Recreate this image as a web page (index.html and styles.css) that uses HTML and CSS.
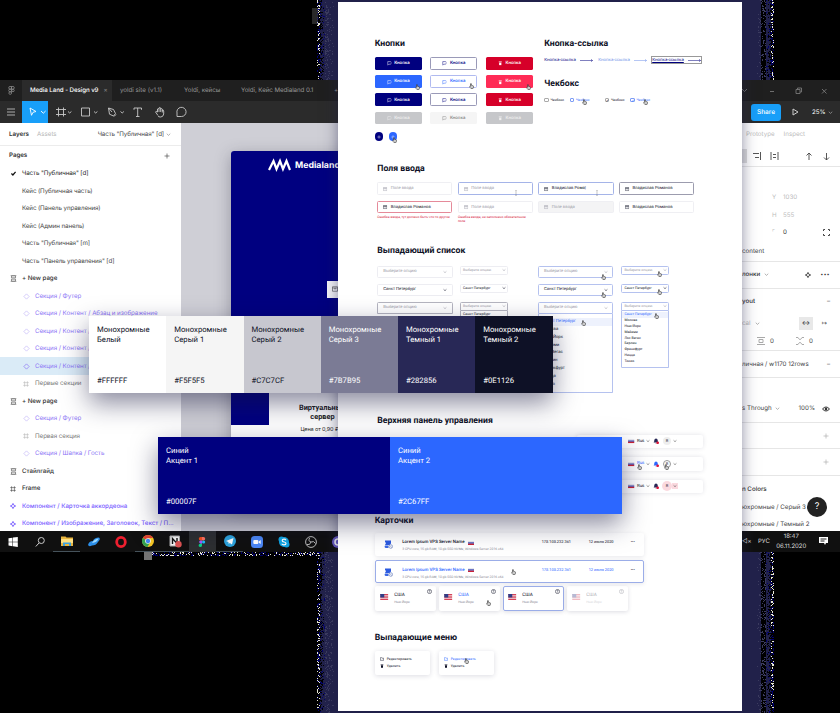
FILE: index.html
```html
<!DOCTYPE html>
<html lang="ru">
<head>
<meta charset="utf-8">
<title>Media Land - Design</title>
<link rel="stylesheet" href="styles.css">
</head>
<body>
<svg class="defs" width="0" height="0">
  <symbol id="hand" viewBox="0 0 12 14"><path d="M3.6 8V2.2a1.1 1.1 0 0 1 2.2 0V5.6l4 .8q1.4.4 1.2 2l-.7 3.1-1 1.8H4.8L1.2 8.7Q1.6 6.8 3.6 8Z" fill="#fff" stroke="#111" stroke-width="1.3"/><path d="M6 8v3M8.2 8v3" stroke="#111" stroke-width=".8"/></symbol>
  <symbol id="chev" viewBox="0 0 8 8"><path d="M1.2 2.7 4 5.4l2.8-2.7" fill="none" stroke="currentColor" stroke-width="1.1"/></symbol>
  <symbol id="chat" viewBox="0 0 12 12"><path d="M2 11.500V1.500h6.500a3.200 3.200 0 0 1 0 7H5Z" fill="none" stroke="currentColor" stroke-width="1.3"/></symbol>
  <symbol id="trash" viewBox="0 0 12 12"><path d="M2 1.500h8v2H2zM3 4.500h6V11H3z" fill="currentColor"/></symbol>
  <symbol id="mail" viewBox="0 0 12 12"><path d="M1 1.500h10v9H1zM1 4h10M4 5.500h4" fill="none" stroke="currentColor" stroke-width="1.3"/></symbol>
  <symbol id="arrow" viewBox="0 0 26 6"><path d="M0 3h25M22 .6 25 3l-3 2.400" fill="none" stroke="currentColor"/></symbol>
  <symbol id="ru" viewBox="0 0 9 6"><path fill="#e8e8ef" d="M0 0h9v2H0z"/><path fill="#2937a8" d="M0 2h9v2H0z"/><path fill="#c92236" d="M0 4h9v2H0z"/></symbol>
  <symbol id="us" viewBox="0 0 16 12"><path fill="#f5e9ee" d="M0 0h16v12H0z"/><path d="M0 1h16M0 4.300h16M0 7.600h16M0 11h16" stroke="#d22f45" stroke-width="1.8"/><path fill="#303d86" d="M0 0h8v6.800H0z"/></symbol>
  <symbol id="diamond" viewBox="0 0 12 12"><path d="m6 1.500 4.500 4.500L6 10.500 1.500 6Z" fill="none" stroke="currentColor" stroke-width="1.2"/></symbol>
  <symbol id="comp" viewBox="0 0 12 12"><path d="m6 0 2.400 2.400L6 4.800 3.600 2.400ZM6 7.200l2.400 2.400L6 12 3.600 9.600ZM2.400 3.600 4.800 6 2.400 8.400 0 6ZM9.600 3.600 12 6 9.600 8.400 7.200 6Z" fill="currentColor"/></symbol>
  <symbol id="frame" viewBox="0 0 12 12"><path d="M3.200.5v11M8.800.5v11M.5 3.200h11M.5 8.800h11" fill="none" stroke="currentColor" stroke-width="1.2"/></symbol>
  <symbol id="stack" viewBox="0 0 12 12"><path d="M2.500 1.500h7v3.400h-7zM2.500 7.100h7v3.400h-7zM1 .2h10M1 11.800h10" fill="none" stroke="currentColor"/></symbol>
  <symbol id="bell" viewBox="0 0 12 12"><path d="M1.500 9V7.800l1-1V4.500Q3 1.500 6 1q3 .5 3.500 3.500v2.300l1 1V9ZM4.600 9.800h2.800L6 11Z" fill="currentColor"/><circle cx="9.300" cy="9.500" r="2.700" fill="#df1539"/></symbol>
  <symbol id="server" viewBox="0 0 18 18"><path d="M2 1h12v6l-3 3H2l2-4-2-2Z" fill="#2c5be0"/><path d="M2 11h7v5H3l-2-2Z" fill="#3b68e4"/><circle cx="13.500" cy="13" r="3.600" fill="#fff" stroke="#6b81bd" stroke-width="1.4"/><path d="m11 11 5 4" stroke="#6b81bd"/></symbol>
  <symbol id="ask" viewBox="0 0 12 12"><circle cx="6" cy="6" r="5" fill="none" stroke="currentColor" stroke-width="1.2"/><path d="M4.500 5q0-1.700 1.600-1.700T7.600 5Q7.500 5.700 6 6.500v.7M6 8v1.200" fill="none" stroke="currentColor" stroke-width="1"/></symbol>
  <symbol id="plus" viewBox="0 0 12 12"><path d="M6 1v10M1 6h10" stroke="currentColor" stroke-width="1.3"/></symbol>
  <symbol id="folder" viewBox="0 0 12 12"><path d="M1 2h4l1 1.500h5V10H1z" fill="none" stroke="currentColor" stroke-width="1.4"/></symbol>
  <symbol id="caret" viewBox="0 0 6 20"><path d="M1 1q2 0 2 2v14q0 2-2 2M5 1Q3 1 3 3M5 19q-2 0-2-2" fill="none" stroke="#555" stroke-width="1.1"/></symbol>
</svg>

<svg class="halo" width="840" height="713" shape-rendering="crispEdges">
  <rect x="325" y="0" width="436" height="713" fill="#22224b"/>
</svg>

<main class="window">
  <header class="tabs">
    <div class="tab logo"><svg width="7" height="9" viewBox="0 0 7 9" fill="none" stroke="#888" stroke-width=".8"><path d="M3.500.5H2a1.300 1.300 0 0 0 0 2.600h1.500zM3.500.5H5a1.300 1.300 0 0 1 0 2.600H3.500zM3.500 3.200H2a1.300 1.300 0 0 0 0 2.600h1.500zM3.500 5.800H2A1.300 1.300 0 1 0 3.500 7z"/><circle cx="5" cy="4.500" r="1.200"/></svg></div>
    <div class="tab active">Media Land - Design v9<span class="x">×</span></div>
    <div class="tab t2">yoldi site (v1.1)</div>
    <div class="tab t3">Yoldi, кейсы</div>
    <div class="tab t4">Yoldi, Кейс Medialand 0.1</div>
    <div class="tab t5">+</div>
    <div class="winctl"><svg width="100" height="21" fill="none" stroke="#777" stroke-width=".9"><path d="m2 9 2.500 2.500L7 9M30 11.500h4M56 9.500h4v4h-4zM57.500 9.500V8h4v4H60M82 9l4.500 4.500M86.500 9 82 13.500"/></svg></div>
  </header>
  <div class="toolbar">
    <div class="tool burger"><svg width="22" height="22" stroke="#bbb" stroke-width=".9"><path d="M7 8h8M7 11h8M7 14h8"/></svg></div>
    <div class="tool picked"><svg width="26" height="22" fill="none" stroke="#fff" stroke-width=".9"><path d="m8 7 6 3.500-3 .8-1.500 3zM19 10l2.300 2.200L23.600 10"/></svg></div>
    <svg width="155" height="22" fill="none" stroke="#c9c9c9" stroke-width=".9"><path d="M10.500 6.500v9M15.500 6.500v9M8 8.500h10M8 13.500h10M20 10.500l1.700 1.500 1.700-1.500M33.500 7h8v8h-8zM46 10.500l1.700 1.500 1.700-1.500M60.500 7l5 1.500 2 4-2 2.500-4-1.800zM60.500 7l3.500 4M66 15.500l2-2M72.500 10.500l1.700 1.500 1.700-1.500M86 8.800V7h7.500v1.800M89.700 7v8.500M88 15.500h3.500"/><path d="M110 14.500l-2.500-3.500q.5-1.500 2 0V8q1-1.200 1.500 0V7q1-1.200 1.700 0v1q1-1 1.600 0v1.500q1.200-1 1.400.500v3q-.5 3-3 3t-2.700-1M111 8v3M112.700 8v3M114.300 9v2.500M129 15.500v-3.500a4.600 4.600 0 1 1 4.500 3.500z"/></svg>
    <span class="grow"></span>
    <b class="share">Share</b>
    <svg class="play" width="8" height="8" viewBox="0 0 8 8"><path d="M2 1v6l5-3z" fill="none" stroke="#ccc"/></svg>
    <span class="pct">25% <svg class="c5"><use href="#chev"/></svg></span>
  </div>

  <div class="work">
    <aside class="left">
      <div class="lhead"><b>Layers</b><span class="dim">Assets</span><span class="pg">Часть "Публичная" [d] <svg class="c5"><use href="#chev"/></svg></span></div>
      <div class="row pages"><b>Pages</b><svg class="i6"><use href="#plus"/></svg></div>
      <div class="row page cur"><svg width="5" height="5" viewBox="0 0 6 6"><path d="M.5 3 2.300 4.800 5.500 1" stroke="#111" stroke-width="1.500" fill="none"/></svg><span>Часть "Публичная" [d]</span></div>
      <div class="row page"><span>Кейс (Публичная часть)</span></div>
      <div class="row page"><span>Кейс (Панель управления)</span></div>
      <div class="row page"><span>Кейс (Админ панель)</span></div>
      <div class="row page"><span>Часть "Публичная" [m]</span></div>
      <div class="row page"><span>Часть "Панель управления" [d]</span></div>
      <div class="row top"><svg class="i7"><use href="#stack"/></svg><b>+ New page</b></div>
      <div class="row sub v"><svg class="i7"><use href="#diamond"/></svg>Секция / Футер</div>
      <div class="row sub v"><svg class="i7"><use href="#diamond"/></svg>Секция / Контент / Абзац и изображение</div>
      <div class="row sub v"><svg class="i7"><use href="#diamond"/></svg>Секция / Контент /</div>
      <div class="row sub v"><svg class="i7"><use href="#diamond"/></svg>Секция / Контент /</div>
      <div class="row sub v sel"><svg class="i7"><use href="#diamond"/></svg>Секция / Контент /</div>
      <div class="row sub"><svg class="i6"><use href="#frame"/></svg><span>Первые секции</span></div>
      <div class="row top"><svg class="i7"><use href="#stack"/></svg><b>+ New page</b></div>
      <div class="row sub v"><svg class="i7"><use href="#diamond"/></svg>Секция / Футер</div>
      <div class="row sub"><svg class="i6"><use href="#frame"/></svg><span>Первая секция</span></div>
      <div class="row sub v"><svg class="i7"><use href="#diamond"/></svg>Секция / Шапка / Гость</div>
      <div class="row top"><svg class="i7"><use href="#stack"/></svg><b>Стайлгайд</b></div>
      <div class="row top"><svg class="i6"><use href="#frame"/></svg><b>Frame</b></div>
      <div class="row top cm"><svg class="i6"><use href="#comp"/></svg><b>Компонент / Карточка аккордеона</b></div>
      <div class="row top cm"><svg class="i6"><use href="#comp"/></svg><b>Компонент / Изображение, Заголовок, Текст / П...</b></div>
    </aside>
    <section class="canvas">
      <div class="site">
        <div class="hero">
          <div class="brand"><svg width="23" height="12" viewBox="0 0 23 12"><path d="M1 11 5.500 2l3 8L12 2l3 8 3.500-8L22 11" fill="none" stroke="#fff" stroke-width="2.200"/></svg>Medialand</div>
          <div class="field"><svg class="i6"><use href="#mail"/></svg></div>
        </div>
        <div class="offer"><b>Виртуальный<br>сервер</b><span>Цена от 0,90 ₽ / час</span></div>
      </div>
    </section>
    <aside class="right">
      <div class="r h23 tabsr"><span>Prototype</span><span>Inspect</span></div>
      <div class="r h21 line"><svg width="98" height="14" fill="none" stroke="#444" stroke-width=".9"><path fill="#ddd" stroke="none" d="M0 0h5v14H0z"/><path d="M11 4.500h6M13 8.500h4M18.500 3v8M29 3v8M36 3v8M31 5.500h3M31 8.500h3M67 11V4M64.500 6.500 67 4l2.500 2.500M84.500 4v7M82 8.500l2.500 2.500L87 8.500"/></svg></div>
      <div class="r h22"></div>
      <div class="r h17 yh"><i>Y</i><span>1030</span></div>
      <div class="r h18 yh"><i>H</i><span>555</span></div>
      <div class="r h18 yh dark"><i>⌜</i><span>0</span><svg width="7" height="7" viewBox="0 0 7 7" fill="none" stroke="#444"><path d="M.5 2V.5H2M5 .5h1.500V2M6.500 5v1.500H5M2 6.500H.5V5"/></svg></div>
      <div class="r h20 line">content</div>
      <div class="r h27 line two"><b>лонки</b><svg class="c5"><use href="#chev"/></svg><svg class="i6 push"><use href="#comp"/></svg><b class="dots">•••</b></div>
      <div class="r h23b"><b>yout</b><em>–</em></div>
      <div class="r h17 two"><span class="dim">cal</span><svg class="c5"><use href="#chev"/></svg><span class="key push">↔</span><span class="key2">↦</span></div>
      <div class="r h22b line gaps"><svg width="8" height="8" fill="none" stroke="#aaa"><path d="M0 .5h8M0 7.500h8M2 2.500h4v3H2z"/></svg><span>0</span><svg width="8" height="8" fill="none" stroke="#aaa"><path d="M0 .5h2l1.500 2h1L6 .5h2M0 7.500h2l1.500-2h1L6 7.500h2"/></svg><span>0</span></div>
      <div class="r h27 line"><span>личная / w1170 12rows</span><em>–</em></div>
      <div class="r h17"></div>
      <div class="r h28 line"><span>s Through</span><svg class="c5 thr"><use href="#chev"/></svg><span class="push op">100%</span><svg width="8" height="6" viewBox="0 0 8 6"><path d="M.5 3Q4-1 7.500 3 4 7 .5 3Z" fill="none" stroke="#333"/><circle cx="4" cy="3" r="1.300" fill="#333"/></svg></div>
      <div class="r h26 line"><svg class="i6 push pl"><use href="#plus"/></svg></div>
      <div class="r h27 line"><svg class="i6 push pl"><use href="#plus"/></svg></div>
      <div class="r h17 colors"><b>n Colors</b></div>
      <div class="r h17">юхромные / Серый 3</div>
      <div class="r h17">юхромные / Темный 2</div>
      <div class="help">?</div>
    </aside>
  </div>

  <footer class="taskbar">
    <div class="ti"><svg viewBox="0 0 12 12"><path fill="#fff" d="m1.500 2.300 4-.6v4h-4zM6 1.600l4.800-.7v4.800H6zM1.500 6.200h4v4l-4-.6zM6 6.200h4.800V11L6 10.300z"/></svg></div>
    <div class="ti"><svg viewBox="0 0 12 12" fill="none" stroke="#ccc"><circle cx="7.300" cy="4.500" r="3"/><path d="M5 7 1.800 10.500"/></svg></div>
    <div class="ti run"><svg viewBox="0 0 12 12"><path fill="#e9b640" d="M0 1.500h4.500l1 1H12V11H0z"/><path fill="#ffe083" d="M0 4h12v4H0z"/><path fill="#3da1e0" d="M2 7.500h8V11H8V9H4v2H2z"/></svg></div>
    <div class="ti"><svg viewBox="0 0 12 12"><path fill="#2b8ee8" d="M0 9q1-4 5-4 1-3.500 6-3.500 2 1.500-1 4.500Q8 9.500 4 9.500 1 11 0 9Z"/><path fill="#9edbff" d="M4 7q2-4 6.500-4.500Q9 6.500 4 7Z"/></svg></div>
    <div class="ti"><svg viewBox="0 0 12 12"><ellipse cx="6" cy="6" rx="4.300" ry="4.600" fill="none" stroke="#ee1f2f" stroke-width="2.800"/></svg></div>
    <div class="ti run"><svg viewBox="0 0 12 12"><circle cx="6" cy="6" r="6" fill="#f4c525"/><path fill="#df4435" d="M6 6 .8 3A6 6 0 0 1 11.200 3H6z"/><path fill="#34a151" d="M.8 3A6 6 0 0 0 5.500 12L8 7.500z"/><circle cx="6" cy="6" r="2.800" fill="#fff"/><circle cx="6" cy="6" r="2.200" fill="#4285f4"/></svg></div>
    <div class="ti run"><svg viewBox="0 0 12 12"><path fill="#f4f4f4" stroke="#aaa" d="M1 1h9.500v10H1z"/><path d="M3.500 9V3.500L8 8.500V3" stroke="#111" stroke-width="1.400" fill="none"/><circle cx="9.500" cy="9.300" r="3.200" fill="#dd5252"/></svg></div>
    <div class="ti hot"><svg viewBox="0 0 12 12"><path fill="#f24e1e" d="M6 1H4.500a1.700 1.700 0 0 0 0 3.400H6z"/><path fill="#ff7262" d="M6 1h1.500a1.700 1.700 0 0 1 0 3.400H6z"/><path fill="#a259ff" d="M6 4.400H4.500a1.700 1.700 0 0 0 0 3.300H6z"/><circle cx="7.600" cy="6" r="1.600" fill="#1abcfe"/><path fill="#0acf83" d="M6 7.700H4.500A1.700 1.700 0 1 0 6 9.500z"/></svg></div>
    <div class="ti run"><svg viewBox="0 0 12 12"><circle cx="6" cy="6" r="6" fill="#2da3dd"/><path fill="#fff" d="m2 6 7.500-3L8 9.500 5.800 8 4.700 9 4.400 7z"/></svg></div>
    <div class="ti"><svg viewBox="0 0 12 12"><rect width="12" height="12" rx="3.500" fill="#4b86f4"/><rect x="2.300" y="4" width="5" height="4" rx="1" fill="#fff"/><path fill="#fff" d="m7.700 5.500 2-1.400v4l-2-1.400z"/></svg></div>
    <div class="ti"><svg viewBox="0 0 12 12"><circle cx="6" cy="6" r="5" fill="#0fa5e4"/><circle cx="3.500" cy="3.500" r="3" fill="#0fa5e4"/><circle cx="8.500" cy="8.500" r="3" fill="#0fa5e4"/><path d="M8 4.200Q7.500 3.200 6 3.200q-1.800 0-1.800 1.300Q4.200 5.700 6 6q2 .3 2 1.500 0 1.300-2 1.300T4 7.800" fill="none" stroke="#fff" stroke-width="1.200"/></svg></div>
    <div class="ti"><svg viewBox="0 0 12 12" fill="none" stroke="#bbb"><circle cx="6" cy="6" r="5.400"/><path d="M6 6Q3 5.500 4.500 2M6 6q3-1.500 4.500 1.500M6 6q-1 3.500-4 2.500"/></svg></div>
    <div class="ti"><svg viewBox="0 0 12 12"><circle cx="6" cy="6" r="6" fill="#6a5cc8"/><circle cx="6" cy="6" r="3" fill="none" stroke="#fff" stroke-width="1.500"/></svg></div>
    <div class="tray"><span>◁×</span><span>РУС</span><span class="clock">18:47<br>06.11.2020</span><svg width="10" height="9" viewBox="0 0 10 9"><path fill="#fff" d="M0 0h9v6H7l-1 2-1-2H0z"/><path d="M1.500 2h6M1.500 4h4" stroke="#222"/></svg></div>
  </footer>
</main>

<article class="sheet">
  <section class="s-buttons">
    <div>
      <h2>Кнопки</h2>
      <div class="btns">
        <div class="btn navy"><svg><use href="#chat"/></svg>Кнопка</div><div class="btn out"><svg><use href="#chat"/></svg>Кнопка</div><div class="btn red"><svg><use href="#trash"/></svg>Кнопка</div>
        <div class="btn blue"><svg><use href="#chat"/></svg>Кнопка<svg class="hand"><use href="#hand"/></svg></div><div class="btn out hov"><svg><use href="#chat"/></svg>Кнопка<svg class="hand"><use href="#hand"/></svg></div><div class="btn pink"><svg><use href="#trash"/></svg>Кнопка<svg class="hand"><use href="#hand"/></svg></div>
        <div class="btn navy"><svg><use href="#chat"/></svg>Кнопка</div><div class="btn out"><svg><use href="#chat"/></svg>Кнопка</div><div class="btn red"><svg><use href="#trash"/></svg>Кнопка</div>
        <div class="btn off"><svg><use href="#chat"/></svg>Кнопка</div><div class="btn off2"><svg><use href="#chat"/></svg>Кнопка</div><div class="btn off"><svg><use href="#trash"/></svg>Кнопка</div>
      </div>
      <div class="rounds"><i class="navy"><svg><use href="#plus"/></svg></i><i class="blue"><svg><use href="#plus"/></svg><svg class="hand"><use href="#hand"/></svg></i></div>
    </div>
    <div>
      <h2>Кнопка-ссылка</h2>
      <div class="links"><span>Кнопка-ссылка<svg><use href="#arrow"/></svg></span><span class="lb">Кнопка-ссылка<svg><use href="#arrow"/></svg></span><span class="lf"><u>Кнопка-ссылка</u><svg><use href="#arrow"/></svg></span></div>
      <h2 class="h-check">Чекбокс</h2>
      <div class="checks"><label><i></i>Чекбокс</label><label class="lb"><i></i>Чекбокс<svg class="hand"><use href="#hand"/></svg></label><label class="c3"><i>✓</i>Чекбокс</label><label class="lb"><i>✓</i>Чекбокс<svg class="hand"><use href="#hand"/></svg></label></div>
    </div>
  </section>

  <section class="s-inputs">
    <h2>Поля ввода</h2>
    <div class="inputs">
      <div class="inp ph"><svg><use href="#mail"/></svg>Поле ввода</div>
      <div class="inp ph foc"><svg><use href="#mail"/></svg>Поле ввода<svg class="ibeam"><use href="#caret"/></svg></div>
      <div class="inp foc"><svg><use href="#mail"/></svg>Владислав Рома|<svg class="ibeam"><use href="#caret"/></svg></div>
      <div class="inp drk"><svg><use href="#mail"/></svg>Владислав Романов</div>
      <div><div class="inp err"><svg><use href="#mail"/></svg>Владислав Романов</div><p>Ошибка ввода, тут должно быть что-то другое</p></div>
      <div><div class="inp ph"><svg><use href="#mail"/></svg>Поле ввода</div><p>Ошибка ввода, не заполнено обязательное поле</p></div>
      <div class="inp ph dis"><svg><use href="#mail"/></svg>Поле ввода</div>
      <div class="inp"><svg><use href="#mail"/></svg>Владислав Романов</div>
    </div>
  </section>

  <section class="s-drop">
    <h2>Выпадающий список</h2>
    <div class="drops">
      <div class="col big">
        <div class="dd ph">Выберите опцию<svg class="c4"><use href="#chev"/></svg></div>
        <div class="dd">Санкт Петербург<svg class="c4"><use href="#chev"/></svg></div>
        <div class="dd ph open g">Выберите опцию<svg class="c4"><use href="#chev"/></svg></div>
      </div>
      <div class="col small">
        <div class="dd ph">Выберите опцию<svg class="c4"><use href="#chev"/></svg></div>
        <div class="dd">Санкт Петербург<svg class="c4"><use href="#chev"/></svg></div>
        <div class="dd ph open g">Выберите опцию<svg class="c4"><use href="#chev"/></svg></div>
        <div class="list g"><span>Санкт Петербург</span></div>
      </div>
      <div class="col big hv">
        <div class="dd ph">Выберите опцию<svg class="c4"><use href="#chev"/></svg><svg class="hand"><use href="#hand"/></svg></div>
        <div class="dd">Санкт Петербург<svg class="c4"><use href="#chev"/></svg><svg class="hand"><use href="#hand"/></svg></div>
        <div class="dd ph open">Выберите опцию<svg class="c4"><use href="#chev"/></svg></div>
        <div class="list"><span class="on">Санкт Петербург<svg class="hand"><use href="#hand"/></svg></span><span>Москва</span><span>Нью-Йорк</span><span>Майами</span><span>Лос Вегас</span><span>Берлин</span><span>Франкфурт</span><span>Ницца</span><span>Токио</span></div>
      </div>
      <div class="col small hv">
        <div class="dd ph">Выберите опцию<svg class="c4"><use href="#chev"/></svg><svg class="hand"><use href="#hand"/></svg></div>
        <div class="dd">Санкт Петербург<svg class="c4"><use href="#chev"/></svg><svg class="hand"><use href="#hand"/></svg></div>
        <div class="dd ph open">Выберите опцию<svg class="c4"><use href="#chev"/></svg></div>
        <div class="list"><span class="on">Санкт Петербург<svg class="hand"><use href="#hand"/></svg></span><span>Москва</span><span>Нью-Йорк</span><span>Майами</span><span>Лос Вегас</span><span>Берлин</span><span>Франкфурт</span><span>Ницца</span><span>Токио</span></div>
      </div>
    </div>
  </section>

  <section class="s-top">
    <h2>Верхняя панель управления</h2>
    <div class="bars">
      <div class="bar"><svg class="fl"><use href="#ru"/></svg><span>Rus</span><svg class="c4"><use href="#chev"/></svg><svg class="bell"><use href="#bell"/></svg><i>R</i><svg class="c4"><use href="#chev"/></svg></div>
      <div class="bar hvb"><svg class="fl"><use href="#ru"/></svg><span>Rus<svg class="hand"><use href="#hand"/></svg></span><svg class="c4"><use href="#chev"/></svg><svg class="bell"><use href="#bell"/></svg><i>R<svg class="hand"><use href="#hand"/></svg></i><svg class="c4"><use href="#chev"/></svg></div>
      <div class="bar actb"><svg class="fl"><use href="#ru"/></svg><span>Rus</span><svg class="c4"><use href="#chev"/></svg><svg class="bell"><use href="#bell"/></svg><i>R</i><svg class="c4"><use href="#chev"/></svg></div>
    </div>
  </section>

  <section class="s-cards">
    <h2>Карточки</h2>
    <div class="srv"><svg class="si"><use href="#server"/></svg><div class="nm"><b>Lorem Ipsum VPS Server Name <svg><use href="#ru"/></svg></b><small>3 CPU core, 15 gb RAM, 10 gb SSD NVMe, Windows Server 2016 x64</small></div><span class="ip">178.108.232.361</span><span class="dt">12 июля 2020</span><span class="mo">•••</span></div>
    <div class="srv on"><svg class="si"><use href="#server"/></svg><div class="nm"><b>Lorem Ipsum VPS Server Name <svg><use href="#ru"/></svg></b><small>3 CPU core, 15 gb RAM, 10 gb SSD NVMe, Windows Server 2016 x64</small></div><span class="ip">178.108.232.361</span><span class="dt">12 июля 2020</span><span class="mo">•••</span><svg class="hand"><use href="#hand"/></svg></div>
    <div class="ctry">
      <div class="ct"><svg class="us"><use href="#us"/></svg><div><b>США</b><small>Нью-Йорк</small></div><svg class="q"><use href="#ask"/></svg></div>
      <div class="ct hv"><svg class="us"><use href="#us"/></svg><div><b>США</b><small>Нью-Йорк</small></div><svg class="q"><use href="#ask"/></svg><svg class="hand"><use href="#hand"/></svg></div>
      <div class="ct foc"><svg class="us"><use href="#us"/></svg><div><b>США</b><small>Нью-Йорк</small></div><svg class="q"><use href="#ask"/></svg></div>
      <div class="ct fade"><svg class="us"><use href="#us"/></svg><div><b>США</b><small>Нью-Йорк</small></div><svg class="q"><use href="#ask"/></svg></div>
    </div>
  </section>

  <section class="s-menus">
    <h2>Выпадающие меню</h2>
    <div class="menus">
      <div class="menu"><span><svg><use href="#folder"/></svg>Редактировать</span><span><svg><use href="#trash"/></svg>Удалить</span></div>
      <div class="menu"><span class="lb"><svg><use href="#folder"/></svg>Редактировать<svg class="hand"><use href="#hand"/></svg></span><span><svg><use href="#trash"/></svg>Удалить</span></div>
    </div>
  </section>
</article>

<div class="palette mono">
  <div class="sw white"><span>Монохромные<br>Белый</span><span>#FFFFFF</span></div>
  <div class="sw g1"><span>Монохромные<br>Серый 1</span><span>#F5F5F5</span></div>
  <div class="sw g2"><span>Монохромные<br>Серый 2</span><span>#C7C7CF</span></div>
  <div class="sw g3"><span>Монохромные<br>Серый 3</span><span>#7B7B95</span></div>
  <div class="sw d1"><span>Монохромные<br>Темный 1</span><span>#282856</span></div>
  <div class="sw d2"><span>Монохромные<br>Темный 2</span><span>#0E1126</span></div>
</div>
<div class="palette accent">
  <div class="sw a1"><span>Синий<br>Акцент 1</span><span>#00007F</span></div>
  <div class="sw a2"><span>Синий<br>Акцент 2</span><span>#2C67FF</span></div>
</div>
<script src="halo.js"></script>
</body>
</html>
```
FILE: halo.js
```js
// Scatters the dithered edge of the dark glow around the sheet.
(function () {
  var svg = document.querySelector('.halo');
  var seed = 7;
  function rnd() { seed = (seed * 16807) % 2147483647; return seed / 2147483647; }
  var paths = { '#22224b': '', '#000': '', '#00006e': '', '#e8e8d8': '', '#3c3c60': '' };
  function dot(color, x, y) { paths[color] += 'M' + x + ' ' + y + 'h1v1h-1z'; }
  function column(edge, dir) {
    for (var y = 0; y < 713; y++) {
      for (var d = 0; d < 17; d++) {
        var x = edge - dir * d;
        var r = rnd();
        if (d < 3) {
          if (r < 0.2) dot('#e8e8d8', x, y);
          else if (r < 0.42) dot('#00006e', x, y);
        } else if (d < 8) {
          dot(r < 0.45 + (d - 3) * 0.12 ? '#22224b' : r < 0.93 ? '#000' : '#00006e', x, y);
        } else if (r < 0.3 * (17 - d) / 9) dot('#3c3c60', x, y);
      }
    }
  }
  column(317, -1);
  column(773, 1);
  for (var x = 152; x < 320; x++) {
    for (var y = 552; y < 556; y++) {
      var r = rnd();
      if (r < 0.17) dot('#e8e8d8', x, y);
      else if (r < 0.4) dot('#00006e', x, y);
    }
  }
  for (var c in paths) {
    var p = document.createElementNS('http://www.w3.org/2000/svg', 'path');
    p.setAttribute('d', paths[c]);
    p.setAttribute('fill', c);
    svg.appendChild(p);
  }
  function chip(d, opacity) {
    var el = document.createElementNS('http://www.w3.org/2000/svg', 'path');
    el.setAttribute('d', d);
    el.setAttribute('fill', '#888');
    el.setAttribute('opacity', opacity);
    svg.appendChild(el);
  }
  chip('M144 552h8v8h-8z', 0.85);
  chip('M312 8h6v16h-6z', 0.3);
})();
```
FILE: styles.css
```css
* { box-sizing: border-box; }
body { margin: 0; width: 840px; height: 713px; position: relative; overflow: hidden; background: #000; font-family: Roboto, sans-serif; text-rendering: geometricPrecision; }
svg { flex: none; overflow: visible; }
.defs, .halo { position: absolute; left: 0; top: 0; }
.halo { overflow: hidden; }
.grow { flex: 1; }
.c5 { width: 5px; height: 5px; opacity: .6; }
.c4 { width: 4px; height: 4px; }
.i6 { width: 6px; height: 6px; }
.i7 { width: 7px; height: 7px; }

/* editor window */
.window { position: absolute; left: 0; top: 80px; width: 840px; height: 472px; display: flex; flex-direction: column; font: 6.200px Inter, sans-serif; color: #444; }
.tabs { height: 21px; background: #1f1f1f; display: flex; align-items: center; color: #999; white-space: nowrap; }
.tab { height: 21px; display: flex; align-items: center; flex: none; }
.logo { width: 22px; justify-content: center; }
.active { width: 90px; padding-left: 8px; background: #2b2b2b; color: #fff; font-weight: 500; letter-spacing: -.08px; }
.x { margin-left: 5px; color: #777; }
.t2 { width: 72px; padding-left: 8px; }
.t3 { width: 57px; }
.t4 { width: 93px; letter-spacing: -.06px; }
.winctl { margin-left: auto; width: 100px; height: 21px; }
.toolbar { height: 22px; background: #2b2b2b; display: flex; align-items: center; color: #fff; }
.tool { height: 22px; }
.picked { width: 26px; background: #189ff9; }
.share { width: 30px; height: 17px; line-height: 17px; border-radius: 3px; background: #189ff9; text-align: center; font-weight: 500; font-size: 6.500px; }
.play { margin: 0 13px 0 10px; }
.pct { display: flex; align-items: center; gap: 2px; width: 28px; }
.work { height: 408px; display: flex; }
.left { width: 181px; background: #fff; }
.lhead { height: 23px; display: flex; align-items: center; padding: 0 10px 0 9px; border-bottom: 1px solid #ececec; }
.lhead b, .pages b { font-weight: 600; color: #333; }
.dim { color: #b5b5b5; }
.lhead .dim { margin-left: 8px; }
.pg { margin-left: auto; display: flex; align-items: center; gap: 2px; letter-spacing: -.1px; }
.row { height: 17.500px; display: flex; align-items: center; white-space: nowrap; overflow: hidden; letter-spacing: -.04px; padding-top: 1px; }
.pages { margin-top: 1px; padding: 0 11px 0 9px; justify-content: space-between; }
.page { padding-left: 22px; letter-spacing: -.1px; }
.cur { padding-left: 11px; gap: 6px; color: #222; }
.top { padding-left: 9.500px; gap: 5.500px; }
.top .i6 + b { margin-left: 1px; }
.top b { font-weight: 500; color: #333; }
.top.cm, .top.cm b { color: #7b61ff; }
.sub { padding-left: 23px; gap: 5px; color: #777; }
.sub svg { opacity: .5; }
.sub .i6 + * { margin-left: 1px; }
.v { color: #8b74f5; }
.sel { background: #daebf7; }
.sel svg { opacity: 1; }
.canvas { width: 561px; background: #cfcfd6; padding: 28px 0 0 50px; }
.site { width: 300px; height: 356px; background: #fff; border-radius: 3px; overflow: hidden; box-shadow: 0 4px 16px rgba(40, 40, 60, .35); }
.hero { height: 274px; background: #000080; }
.brand { display: flex; align-items: center; gap: 4px; padding: 8px 0 0 37px; color: #fff; font: 700 8.800px Inter, sans-serif; }
.field { margin: 110px 0 0 96px; width: 60px; height: 17px; background: #f4f4f8; padding: 5px; color: #555; }
.offer { margin: -32px 0 0 38px; width: 107px; height: 80px; background: #fff; position: relative; text-align: center; color: #222; padding-top: 10px; }
.offer b { display: block; font: 700 7.400px/9px Roboto, sans-serif; }
.offer span { display: block; margin-top: 6px; padding-left: 8px; font-size: 5.500px; letter-spacing: -.1px; white-space: nowrap; }
.right { width: 98px; background: #fff; position: relative; }
.r { display: flex; align-items: center; padding-right: 10px; white-space: nowrap; }
.line { border-bottom: 1px solid #e6e6e6; }
.h17 { height: 17.500px; } .h18 { height: 17.500px; } .h20 { height: 20px; } .h21 { height: 21px; } .h22 { height: 22px; } .h23 { height: 23px; }
.h23b { height: 26px; } .h22b { height: 19px; } .h26 { height: 26px; } .h27 { height: 27px; } .h28 { height: 27.500px; }
.r b { font-weight: 500; color: #333; }
.tabsr { padding-left: 4px; gap: 9px; color: #bbb; }
.yh { padding-left: 30px; color: #bbb; }
.yh i { font-style: normal; width: 11px; }
.yh svg { margin-left: auto; }
.dark span { color: #333; }
.r em { margin-left: auto; font-style: normal; }
.two { gap: 4px; }
.thr { margin-left: 3px; }
.push { margin-left: auto; }
.dots { font-size: 5px; letter-spacing: .5px; margin-left: 6px; }
.key { background: #e8e8e8; width: 14px; height: 13px; text-align: center; line-height: 13px; color: #111; margin-right: 5px; }
.key2 { margin-right: 3px; }
.gaps { padding-left: 15px; gap: 5px; }
.gaps span { width: 21px; }
.op { margin-right: 7px; }
.pl { color: #aaa; margin-right: 1px; }
.colors { margin-top: 5px; }
.help { position: absolute; left: 65px; top: 374px; width: 20px; height: 20px; border-radius: 50%; background: #222; color: #fff; font-size: 9px; line-height: 20px; text-align: center; }
.taskbar { height: 21px; background: #101010; display: flex; }
.ti { width: 27.150px; display: flex; align-items: center; justify-content: center; flex: none; }
.ti:first-child { width: 26px; }
.ti svg { width: 12px; height: 12px; }
.run { border-bottom: 1px solid #45525a; }
.hot { background: #2d2f31; }
.tray { margin-left: auto; width: 98px; display: flex; align-items: center; color: #ddd; font-size: 6px; }
.tray span:first-child { width: 16px; }
.clock { margin: 0 11px 0 5px; text-align: center; line-height: 9.500px; width: 33px; white-space: nowrap; }

/* style guide sheet */
.sheet { position: absolute; left: 338px; top: 2px; width: 404px; height: 709px; background: #fff; box-shadow: 0 0 14px rgba(32, 32, 72, .5); display: flex; flex-direction: column; color: #0e1126; font-size: 4.400px; font-weight: 400; white-space: nowrap; }
.sheet section { flex: none; }
h2 { margin: 0; padding-top: 1px; font: 700 8.700px/11px Roboto, sans-serif; color: #0e1126; }
.navy { background: #00007f; color: #fff; }
.blue { background: #2c67ff; color: #fff; }
.lb { color: #2c67ff; }
.hand { position: absolute; width: 5px; height: 6px; }
.s-buttons { height: 159px; padding: 36px 0 0 36.700px; display: grid; grid-template-columns: 169.500px 1fr; align-content: start; }
.btns { margin-top: 7px; display: grid; grid-template-columns: repeat(3, 47px); column-gap: 8.700px; row-gap: 5.500px; }
.btn { height: 12.700px; border-radius: 1.500px; display: flex; align-items: center; justify-content: center; gap: 3px; position: relative; font-size: 4.500px; font-weight: 500; padding-top: .6px; }
.btn svg:first-child { width: 4.500px; height: 4.500px; }
.btn .hand { right: 2px; bottom: -2px; }
.out { border: 1px solid #9a9ab8; color: #00007f; }
.hov { border-color: #b0baf0; color: #2c67ff; }
.red { background: #d60029; color: #fff; }
.pink { background: #ff2b56; color: #fff; }
.off { background: #c6c7ca; color: #eee; }
.off2 { background: #f5f5f5; color: #888; }
.rounds { display: flex; gap: 5.500px; margin-top: 8px; }
.rounds i { width: 8.500px; height: 8.500px; border-radius: 50%; display: flex; align-items: center; justify-content: center; position: relative; }
.rounds svg:first-child { width: 4px; height: 4px; }
.rounds .hand { left: 3px; top: 5px; }
.links { margin-top: 7px; height: 7px; display: flex; gap: 5px; font-size: 4.400px; color: #00007f; }
.links span { display: flex; align-items: center; gap: 4px; width: 49px; height: 6px; padding-top: .5px; }
.links svg { width: 13px; height: 3px; }
.links .lb { color: #6d8fe8; }
.links .lf { outline: .5px solid #999; }
.h-check { margin-top: 13.500px; }
.checks { margin-top: 8px; display: flex; gap: 5px; font-size: 3.500px; align-items: center; }
.checks label { display: flex; gap: 1.700px; align-items: center; width: 20.500px; position: relative; }
.checks i { width: 4.500px; height: 4.500px; flex: none; border: 1px solid #aaa; border-radius: 1px; font: 4px/3px "DejaVu Sans"; }
.checks .c3 { margin-left: 9.500px; }
.checks .lb i { border-color: #7d9df5; }
.checks .hand { right: 3px; top: 1px; }

.s-inputs { height: 82px; padding: 2px 0 0 39.300px; }
.inputs { margin-top: 7.300px; display: grid; grid-template-columns: repeat(4, 75.200px); column-gap: 5.400px; row-gap: 5.700px; }
.inp { height: 12.700px; border: 1px solid #efeff3; border-radius: 1.500px; display: flex; align-items: center; padding: .5px 0 0 4.700px; gap: 3.500px; position: relative; }
.inp svg:first-child { width: 4.200px; height: 4.200px; }
.inp, .big { font-size: 4.200px; }
.ph { color: #9a9aa6; }
.inp.foc { border-color: #a5b4e8; }
.inp.drk { border-color: #9c9cae; }
.inp.err { border-color: #e58a9a; }
.inp.dis { background: #f4f4f5; }
.ibeam { position: absolute; right: 15px; top: 7px; width: 2px; height: 6px; }
.inputs p { margin: 1.500px 0 0; height: 0; font-size: 3.350px; line-height: 4.400px; color: #d61a3c; white-space: normal; width: 69px; }
.inp.err + p { white-space: nowrap; }

.s-drop { height: 171px; padding: 2px 0 0 39.300px; }
.drops { margin-top: 8.500px; display: flex; align-items: flex-start; }
.col { display: flex; flex-direction: column; }
.big { width: 75.300px; margin-right: 7.500px; }
.big.hv { margin-left: 30px; margin-right: 8px; }
.dd { height: 12.500px; margin-bottom: 5.600px; border: 1px solid #ededf2; border-radius: 1.500px; display: flex; align-items: center; justify-content: space-between; padding: 0 4.500px 0 5px; position: relative; }
.small { width: 48px; font-size: 3.500px; }
.small .dd { height: 9px; margin-bottom: 9.100px; padding: 0 1.500px 0 2px; }
.hv .dd { border-color: #b5c2ef; }
.dd .hand { right: 6px; bottom: -3px; }
.dd.open, .small .dd.open { margin-bottom: 0; border-radius: 1.500px 1.500px 0 0; }
.dd.g, .list.g { border-color: #b5b5c0; }
.list { border: 1px solid #b5c2ef; border-top: 0; border-radius: 0 0 1.500px 1.500px; padding: 4px 0; }
.list span { display: block; height: 7.800px; line-height: 7.800px; padding-left: 4px; position: relative; }
.small .list { padding: 1.500px 0 2px; }
.small .list span { height: 5.850px; line-height: 5.850px; padding-left: 2px; }
.list .on { color: #2c67ff; background: #eef2fd; }
.list .hand { right: 26px; top: 2px; }
.small .list .hand { right: 9px; top: 1px; }

.s-top { height: 98.500px; padding: 1px 0 0 39.300px; }
.bars { display: flex; flex-direction: column; gap: 9px; margin-top: 7.500px; padding-left: 200px; }
.bar { width: 126px; height: 13.500px; border-radius: 2px; box-shadow: 0 0 5px rgba(20, 20, 60, .12); display: flex; align-items: center; padding-left: 51px; gap: 2.200px; background: #fff; }
.fl { width: 6.500px; height: 4.300px; }
.bar span { position: relative; width: 6.500px; }
.bar .c4 { color: #444; }
.bell { width: 6px; height: 6px; margin-left: 1.500px; color: #282856; }
.bar i { width: 8px; height: 8px; border-radius: 50%; background: #eee; font: 4px/8px Roboto, sans-serif; text-align: center; margin-left: 1.500px; position: relative; }
.hvb span, .hvb .bell { color: #2c67ff; }
.hvb i { border: 1px solid #999; background: #fff; line-height: 6px; }
.bar .hand { left: 0; top: 3px; }
.actb i, .actb i + svg { background: #fbd9df; box-shadow: 0 0 0 1px #fbd9df; }

.s-cards { height: 117px; padding: 2px 0 0 36.700px; }
.srv { width: 269.500px; height: 23px; margin-top: 4.500px; border-radius: 2px; border: 1px solid transparent; box-shadow: 0 1px 4px rgba(20, 20, 60, .1); display: flex; padding: 5.500px 0 0 8.500px; position: relative; }
.s-cards h2 + .srv { margin-top: 6px; }
.srv.on { border-color: #9bade8; }
.si { width: 9px; height: 9px; margin-top: 1px; }
.nm { margin-left: 9px; width: 139.500px; }
.nm b { display: flex; align-items: center; gap: 3px; font-size: 4.450px; line-height: 7px; font-weight: 500; }
.nm b svg { width: 6px; height: 4px; }
small { display: block; font-size: 3.350px; line-height: 6px; color: #888896; }
.ip, .dt { font-size: 3.900px; line-height: 6px; }
.ip { width: 47px; }
.dt { width: 42px; }
.mo { font-size: 4px; }
.on b, .on .ip, .on .dt { color: #2c67ff; }
.srv .hand { left: 135px; top: 8px; }
.ctry { display: flex; gap: 2.800px; margin-top: 3px; }
.ct { width: 61.200px; height: 25px; border-radius: 2px; border: 1px solid transparent; box-shadow: 0 1px 4px rgba(20, 20, 60, .15); display: flex; padding: 5.500px 0 0 4.500px; position: relative; gap: 5.500px; }
.us { width: 8.500px; height: 6px; margin-top: 1px; }
.ct b { display: block; font-size: 4.700px; line-height: 6.500px; font-weight: 400; }
.ct small { font-size: 3.300px; }
.q { position: absolute; right: 2.500px; top: 2px; width: 5px; height: 5px; }
.ct.hv b { color: #2c67ff; }
.ct.foc { border-color: #9bade8; }
.ct.fade > * { opacity: .35; }
.ct .hand { right: 8px; bottom: 4px; }

.s-menus { padding: 2px 0 0 36.700px; }
.menus { display: flex; gap: 8.500px; margin-top: 7.500px; }
.menu { width: 55.500px; height: 24px; border-radius: 2px; box-shadow: 0 1px 5px rgba(20, 20, 60, .15); padding: 4px 0 0 5px; font-size: 3.500px; }
.menu span { display: flex; align-items: center; gap: 3px; height: 7.500px; position: relative; }
.menu svg:first-child { width: 4px; height: 4px; }
.menu .hand { left: 20px; top: 3px; }

/* colour swatches */
.palette { position: absolute; display: flex; height: 77px; box-shadow: 0 10px 26px rgba(20, 20, 60, .5); }
.mono { left: 89px; top: 316px; width: 463.500px; }
.accent { left: 158px; top: 437px; width: 464px; }
.sw { flex: 1; display: flex; flex-direction: column; justify-content: space-between; padding: 8.500px 8px 7.500px; font-size: 7.700px; line-height: 10px; color: #fff; white-space: nowrap; }
.white, .g1, .g2 { color: #0e1126; }
.white { background: #fff; }
.g1 { background: #f5f5f5; }
.g2 { background: #c7c7cf; }
.g3 { background: #7b7b95; }
.d1 { background: #282856; }
.d2 { background: #0e1126; }
.a1 { background: #00007f; }
.a2 { background: #2c67ff; }
```
